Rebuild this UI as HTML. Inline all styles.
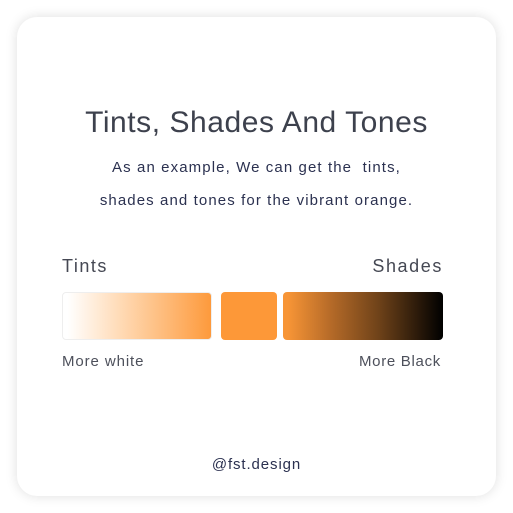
<!DOCTYPE html>
<html><head><style>
html,body{margin:0;padding:0;width:513px;height:513px;background:#fff;overflow:hidden;font-family:"Liberation Sans",sans-serif;}
.card{position:absolute;left:17px;top:17px;width:479px;height:479px;border-radius:20px;background:#fff;box-shadow:0 0 12px rgba(0,0,0,0.13);}
.t{position:absolute;white-space:nowrap;}
.box{position:absolute;top:292px;height:48px;border-radius:4px;}
</style></head><body>
<div class="card"></div>
<div class="t" style="left:0;width:513px;text-align:center;top:106px;font-size:30px;color:#3d414d;letter-spacing:0.55px;">Tints, Shades And Tones</div>
<div class="t" style="left:0;width:513px;text-align:center;top:159px;font-size:15px;color:#2b3150;letter-spacing:1.1px;">As an example, We can get the&nbsp; tints,</div>
<div class="t" style="left:0;width:513px;text-align:center;top:192px;font-size:15px;color:#2b3150;letter-spacing:1.1px;">shades and tones for the vibrant orange.</div>
<div class="t" style="left:62px;top:256px;font-size:18px;color:#454853;letter-spacing:1.5px;">Tints</div>
<div class="t" style="right:70px;top:256px;font-size:18px;color:#454853;letter-spacing:1.6px;">Shades</div>
<div class="box" style="left:62px;width:150px;background:linear-gradient(90deg,#fff 3%,#ffd9b3 40%,#fd9a3c);border:1px solid #eee;box-sizing:border-box;"></div>
<div class="box" style="left:221px;width:56px;background:#fd9838;"></div>
<div class="box" style="left:283px;width:160px;background:linear-gradient(90deg,#f79536 3%,#b56a28 30%,#6e4219 60%,#000);"></div>
<div class="t" style="left:62px;top:353px;font-size:15px;color:#4d505b;letter-spacing:0.9px;">More white</div>
<div class="t" style="right:72px;top:353px;font-size:15px;color:#4d505b;letter-spacing:0.7px;">More Black</div>
<div class="t" style="left:0;width:513px;text-align:center;top:456px;font-size:15px;color:#2b3150;letter-spacing:0.9px;">@fst.design</div>
</body></html>
